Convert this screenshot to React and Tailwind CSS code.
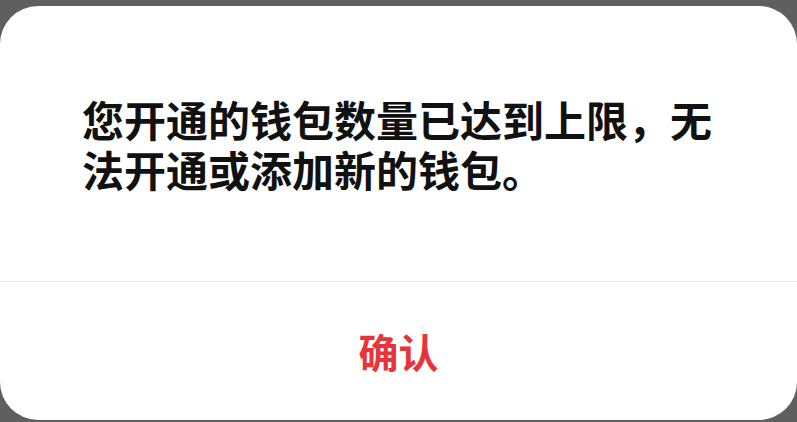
export default function App() {
  return (
    <div className="w-[797px] h-[422px] bg-[#5f5f5f] pt-[6px] overflow-hidden" style={{ fontFamily: '"Noto Sans CJK SC", "Noto Sans", sans-serif' }}>
      <div className="h-[414px] bg-white rounded-[38px] flex flex-col">
        {/* Message */}
        <div className="h-[275px] px-[82px] pt-[88px]">
          <p className="text-[42px] leading-[50px] font-bold text-[#111]">
            您开通的钱包数量已达到上限，无法开通或添加新的钱包。
          </p>
        </div>
        <div className="h-px bg-[#e6e6e6]" />
        {/* Confirm button */}
        <button className="flex-1 flex items-center justify-center text-[40px] font-bold text-[#e8333a]">
          确认
        </button>
      </div>
    </div>
  )
}
